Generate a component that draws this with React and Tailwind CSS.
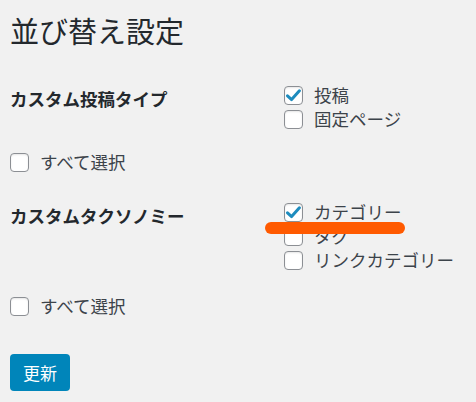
import React from "react";

function Box({ checked }) {
  return (
    <span className="relative flex h-[19px] w-[19px] shrink-0 items-center justify-center rounded-[4px] border border-[#8c8f94] bg-white shadow-[inset_0_1px_2px_rgba(0,0,0,0.1)]">
      {checked && (
        <svg width="15" height="13" viewBox="0 0 15 13" className="block">
          <path d="M1.5 6.8 L5.6 10.6 L13.4 1.8" fill="none" stroke="#1e8cbe" strokeWidth="3" strokeLinecap="round" strokeLinejoin="round" />
        </svg>
      )}
    </span>
  );
}

function Row({ checked, label }) {
  return (
    <div className="flex h-[24px] items-center gap-[11px]">
      <Box checked={checked} />
      <span className="text-[17.5px] leading-[24px] text-[#3c434a]">{label}</span>
    </div>
  );
}

export default function App() {
  return (
    <div className="relative h-[402px] w-[476px] overflow-hidden bg-[#f1f1f1] pl-[10px] pt-[10px] font-['Noto_Sans_CJK_JP',sans-serif] text-[#23282d]">
      <h1 className="text-[29px] font-normal leading-[40px] text-[#23282d]">並び替え設定</h1>

      <div className="mt-[33px] flex">
        <div className="w-[274px] pt-[4px] text-[17.5px] font-bold leading-[24px]">カスタム投稿タイプ</div>
        <div className="flex flex-col">
          <Row checked label="投稿" />
          <Row label="固定ページ" />
        </div>
      </div>

      <div className="mt-[19px]">
        <Row label="すべて選択" />
      </div>

      <div className="mt-[26px] flex">
        <div className="w-[274px] pt-[4px] text-[17.5px] font-bold leading-[24px]">カスタムタクソノミー</div>
        <div className="flex flex-col">
          <Row checked label="カテゴリー" />
          <Row label="タグ" />
          <Row label="リンクカテゴリー" />
        </div>
      </div>

      <div className="mt-[22px]">
        <Row label="すべて選択" />
      </div>

      <button className="mt-[36px] flex h-[37px] w-[60px] items-center justify-center rounded-[4px] bg-[#0085ba] text-[17px] text-white">
        更新
      </button>

      <div className="absolute left-[265px] top-[222px] h-[12px] w-[140px] rounded-full bg-[#ff5a00]" />
    </div>
  );
}
